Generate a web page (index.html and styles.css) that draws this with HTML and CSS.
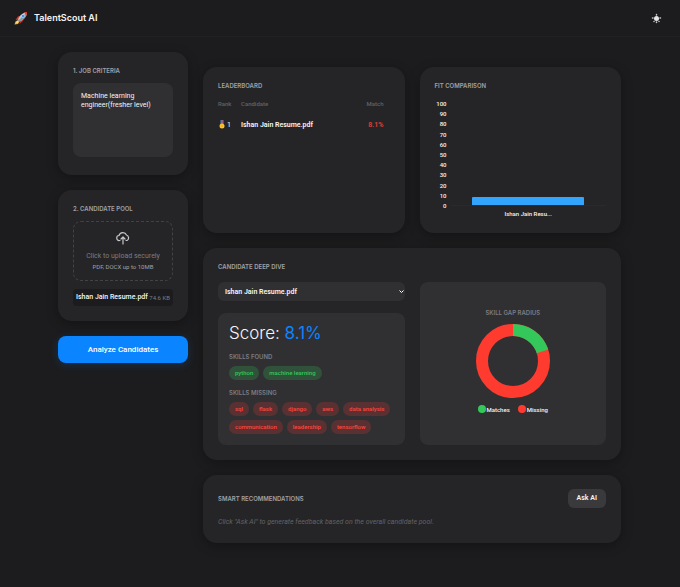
FILE: index.html
```html
<!DOCTYPE html>
<html lang="en">
<head>
  <meta charset="UTF-8">
  <meta name="viewport" content="width=device-width, initial-scale=1.0">
  <title>TalentScout AI</title>
  <link rel="stylesheet" href="styles.css">
</head>
<body>
  <header class="navbar">
    <div class="brand">
      <svg class="rocket" viewBox="0 0 28 28" aria-hidden="true">
        <path d="M8 11 L14 9 L10 17 L3 18 Z" fill="#e0392b"/>
        <path d="M18 20 L20 14 L12 18 L11 26 Z" fill="#c62f24"/>
        <path d="M8 18 L11 21 L8 26 L1 27 L3 21 Z" fill="#f7b52c"/>
        <path d="M7 20 L9 22 L6 24 L4 24 Z" fill="#fff0a0"/>
        <path d="M8 18 C10 10 17 3 26 2 C26 11 19 18 11 21 Z" fill="#b9cbd8"/>
        <path d="M11 21 C19 18 26 11 26 2 L9 19 Z" fill="#7f97a8"/>
        <path d="M20 3 C22 2 24 2 26 2 C26 4 26 6 25 8 Z" fill="#e0392b"/>
        <circle cx="18" cy="10" r="3" fill="#2f7fd0" stroke="#e8f0f5"/>
      </svg>
      <span>TalentScout AI</span>
    </div>
    <button class="theme-toggle" aria-label="Toggle theme">
      <svg viewBox="0 0 22 22" aria-hidden="true">
        <g stroke="#c7c7cc" stroke-width="3" stroke-linecap="round">
          <path d="M11 3v1M11 18v1M3 10h1M18 10h1M6 17v0M16 17v0"/>
        </g>
        <circle cx="11" cy="11" r="5" fill="#e5e5ea"/>
      </svg>
    </button>
  </header>

  <div class="container">
    <aside class="sidebar">
      <section class="card">
        <h2><label for="job">1. Job Criteria</label></h2>
        <textarea id="job">Machine learning engineer(fresher level)</textarea>
      </section>

      <section class="card pool">
        <h2>2. Candidate Pool</h2>
        <button class="upload">
          <svg viewBox="0 0 28 28" fill="none" stroke="#c7c7cc" stroke-width="2.4" stroke-linecap="round" stroke-linejoin="round" aria-hidden="true">
            <path d="M8 19H7a5 5 0 0 1-1-10 8 8 0 0 1 15-1 6 6 0 0 1 1 11h-2"/>
            <path d="M14 26V12M10 16l4-4 4 4"/>
          </svg>
          <span class="upload-text">Click to upload securely</span>
          <span class="upload-hint">PDF, DOCX up to 10MB</span>
        </button>
        <div class="file">
          <span>Ishan Jain Resume.pdf</span>
          <small>74.6 KB</small>
        </div>
      </section>

      <button class="analyze">Analyze Candidates</button>
    </aside>

    <main class="dashboard">
      <section class="card top-card">
        <h2>Leaderboard</h2>
        <table>
          <thead>
            <tr><th class="rank">Rank</th><th>Candidate</th><th class="match">Match</th></tr>
          </thead>
          <tbody>
            <tr>
              <td>
                <svg class="medal" viewBox="0 0 12 18" aria-hidden="true">
                  <path d="M3 0h6v8H3z" fill="#4b83c4"/>
                  <path d="M5 0h2v8H5z" fill="#d8443c"/>
                  <circle cx="6" cy="12" r="5" fill="#fdc02f"/>
                  <circle cx="6" cy="12" r="2" fill="#f7ae22"/>
                </svg>1
              </td>
              <td class="name">Ishan Jain Resume.pdf</td>
              <td class="match low">8.1%</td>
            </tr>
          </tbody>
        </table>
      </section>

      <section class="card top-card">
        <h2>Fit Comparison</h2>
        <div class="chart">
          <div class="y-axis">
            <span>100</span><span>90</span><span>80</span><span>70</span><span>60</span><span>50</span><span>40</span><span>30</span><span>20</span><span>10</span><span>0</span>
          </div>
          <div class="plot">
            <div class="bar-area"><div class="bar" style="height: 8.1%"></div></div>
            <div class="x-label">Ishan Jain Resu...</div>
          </div>
        </div>
      </section>

      <section class="card wide">
        <h2>Candidate Deep Dive</h2>
        <div class="deep-dive">
          <div class="details">
            <div class="select-wrap">
              <select aria-label="Candidate">
                <option>Ishan Jain Resume.pdf</option>
              </select>
              <svg class="chevron" viewBox="0 0 10 6" fill="none" stroke="#fff" stroke-width="2" aria-hidden="true"><path d="M1 1l4 4 4-4"/></svg>
            </div>
            <div class="panel score-panel">
              <div class="score">Score: <span>8.1%</span></div>
              <h3>Skills Found</h3>
              <div class="tags found">
                <span>python</span><span>machine learning</span>
              </div>
              <h3>Skills Missing</h3>
              <div class="tags missing">
                <span>sql</span><span>flask</span><span>django</span><span>aws</span><span>data analysis</span><span>communication</span><span>leadership</span><span>tensorflow</span>
              </div>
            </div>
          </div>
          <div class="panel radius-panel">
            <h3>Skill Gap Radius</h3>
            <svg class="donut" viewBox="0 0 74 74" fill="none" stroke-width="12" aria-hidden="true">
              <circle cx="37" cy="37" r="31" stroke="#ff3b30"/>
              <circle cx="37" cy="37" r="31" stroke="#34c759" pathLength="100" stroke-dasharray="20 80" transform="rotate(-90 37 37)"/>
            </svg>
            <div class="legend">
              <span class="matches">Matches</span>
              <span class="misses">Missing</span>
            </div>
          </div>
        </div>
      </section>

      <section class="card wide recommendations">
        <div class="rec-head">
          <h2>Smart Recommendations</h2>
          <button class="ask">Ask AI</button>
        </div>
        <p>Click "Ask AI" to generate feedback based on the overall candidate pool.</p>
      </section>
    </main>
  </div>
</body>
</html>
```
FILE: styles.css
```css
* {
  box-sizing: border-box;
}
body {
  margin: 0;
  background: #1c1c1e;
  color: #f5f5f7;
  font: 7px/9px Roboto, "Liberation Sans", sans-serif;
}
button, textarea, select {
  font: inherit;
  color: inherit;
  border: none;
}
button {
  cursor: pointer;
}
h2, h3, .brand, .score {
  font-family: Inter, "Liberation Sans", sans-serif;
}
h2, h3 {
  margin: 0;
  font-size: 6px;
  line-height: 8px;
  font-weight: 600;
  text-transform: uppercase;
}
h2 {
  margin-bottom: 8px;
  color: #a1a1a6;
}
h3 {
  color: #7c7c82;
}

/* header */
.navbar {
  display: flex;
  justify-content: space-between;
  align-items: center;
  height: 37px;
  padding: 0 18px 0 14px;
  border-bottom: 1px solid #202022;
}
.brand {
  display: flex;
  align-items: center;
  gap: 6px;
  font-size: 9px;
  line-height: 12px;
  font-weight: 600;
}
.rocket {
  width: 14px;
  height: 14px;
}
.theme-toggle {
  display: flex;
  padding: 0;
  background: none;
}
.theme-toggle svg {
  width: 11px;
  height: 11px;
}

/* layout */
.container {
  display: grid;
  grid-template-columns: 130px 1fr;
  gap: 15px;
  padding: 15px 59px 44px 58px;
}
.sidebar {
  display: flex;
  flex-direction: column;
  gap: 15px;
}
.dashboard {
  display: grid;
  grid-template-columns: 1fr 1fr;
  align-content: start;
  gap: 15px;
  padding-top: 15px;
}
.wide {
  grid-column: 1 / -1;
}
.card {
  padding: 15px;
  background: #252527;
  border-radius: 14px;
  box-shadow: 0 3px 12px rgba(0, 0, 0, 0.3);
}

/* sidebar */
textarea {
  display: block;
  width: 100%;
  height: 74px;
  margin-bottom: 3px;
  padding: 9px 8px;
  background: #303032;
  border-radius: 8px;
  resize: none;
}
.upload {
  display: flex;
  flex-direction: column;
  align-items: center;
  width: 100%;
  height: 60px;
  padding: 9px 4px;
  background: none;
  border: 1px dashed #424245;
  border-radius: 8px;
}
.upload svg {
  width: 14px;
  height: 14px;
  margin-bottom: 7px;
}
.upload-text {
  color: #7c7c82;
}
.upload-hint {
  margin-top: 1px;
  font-size: 6px;
  color: #a1a1a6;
}
.file {
  display: flex;
  justify-content: space-between;
  align-items: center;
  margin-top: 8px;
  padding: 4px 3px;
  background: #1c1c1e;
  border-radius: 4px;
  white-space: nowrap;
}
.file span {
  font-weight: 500;
}
.file small {
  font-size: 6px;
  color: #7c7c82;
}
.analyze {
  height: 27px;
  background: #0a84ff;
  border-radius: 8px;
  font-size: 8px;
  font-weight: 500;
  color: #fff;
  box-shadow: 0 2px 8px rgba(10, 132, 255, 0.2);
}

/* leaderboard */
.top-card {
  height: 166px;
}
table {
  width: 100%;
  border-collapse: collapse;
  text-align: left;
}
th {
  padding: 1px 0 6px;
  font-size: 6px;
  font-weight: 500;
  color: #636366;
}
td {
  padding: 6px 0;
  vertical-align: middle;
}
.rank {
  width: 23px;
}
.medal {
  width: 6px;
  height: 9px;
  margin: 0 2px 0 1px;
  vertical-align: -2px;
}
.name {
  font-weight: 600;
}
.match {
  padding-right: 6px;
  text-align: right;
}
.low {
  font-weight: 600;
  color: #e5403a;
}

/* bar chart */
.chart {
  display: flex;
  gap: 4px;
  margin-top: 9px;
  font-size: 6px;
  font-weight: 500;
}
.y-axis {
  display: flex;
  flex-direction: column;
  justify-content: space-between;
  width: 12px;
  height: 111px;
  text-align: right;
}
.plot {
  flex: 1;
  padding-top: 5px;
}
.bar-area {
  display: flex;
  justify-content: center;
  align-items: flex-end;
  height: 102px;
  border-bottom: 1px solid #2a2a2c;
}
.bar {
  width: 72%;
  background: #32a5ff;
  border-radius: 1px 1px 0 0;
}
.x-label {
  margin-top: 3px;
  text-align: center;
}

/* deep dive */
.deep-dive {
  display: grid;
  grid-template-columns: 1fr 1fr;
  gap: 15px;
  margin-top: 11px;
}
.panel {
  background: #303032;
  border-radius: 8px;
}
.select-wrap {
  position: relative;
  margin-bottom: 12px;
}
select {
  display: block;
  width: 100%;
  height: 19px;
  padding: 1px 7px 0;
  background: #303032;
  border-radius: 6px;
  font-weight: 600;
  appearance: none;
}
.chevron {
  position: absolute;
  top: 8px;
  right: 1px;
  width: 5px;
  height: 3px;
}
.score-panel {
  padding: 10px 11px 11px;
}
.score {
  margin-bottom: 10px;
  font-size: 17px;
  line-height: 20px;
  font-weight: 300;
}
.score span {
  font-weight: 400;
  color: #0a84ff;
}
.tags {
  display: flex;
  flex-wrap: wrap;
  gap: 4px;
  margin-top: 5px;
  font-size: 6px;
  font-weight: 500;
}
.tags span {
  padding: 2px 6px 3px;
  border-radius: 7px;
}
.found {
  margin-bottom: 9px;
}
.found span {
  background: #30523a;
  color: #34c759;
}
.missing span {
  background: #5a3132;
  color: #ff453a;
}
.radius-panel {
  display: flex;
  flex-direction: column;
  justify-content: center;
  align-items: center;
  padding-bottom: 5px;
}
.donut {
  width: 74px;
  height: 74px;
  margin: 7px 0;
}
.legend {
  display: flex;
  gap: 8px;
  font-size: 6px;
  font-weight: 500;
}
.legend span {
  display: flex;
  align-items: center;
  gap: 1px;
}
.legend span::before {
  content: "";
  width: 8px;
  height: 8px;
  border-radius: 50%;
  background: #34c759;
}
.legend .misses::before {
  background: #ff3b30;
}

/* recommendations */
.rec-head {
  display: flex;
  justify-content: space-between;
  align-items: center;
  margin-top: -1px;
}
.rec-head h2 {
  margin: 0;
}
.ask {
  height: 19px;
  padding: 0 9px;
  background: #3a3a3c;
  border-radius: 6px;
  font-weight: 600;
}
.recommendations p {
  margin: 10px 0 1px;
  font-style: italic;
  color: #636366;
}
```
